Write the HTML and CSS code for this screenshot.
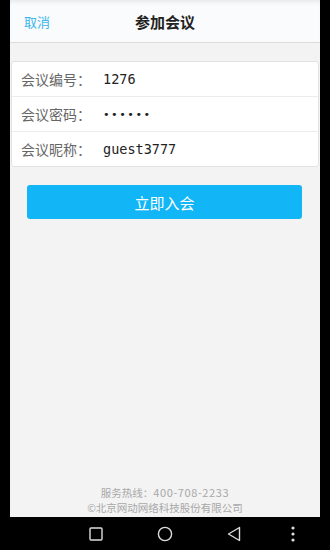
FILE: index.html
```html
<!DOCTYPE html>
<html>
<head>
<meta charset="utf-8">
<link rel="stylesheet" href="styles.css">
</head>
<body>
<div class="device">
  <div class="screen">
    <header class="header">
      <span class="cancel">取消</span>
      <span class="title">参加会议</span>
    </header>
    <div class="card">
      <div class="row"><span class="label">会议编号：</span><span class="value">1276</span></div>
      <div class="row"><span class="label">会议密码：</span><span class="value dots">••••••</span></div>
      <div class="row"><span class="label">会议昵称：</span><span class="value">guest3777</span></div>
    </div>
    <button class="join">立即入会</button>
    <div class="spacer"></div>
    <footer class="footer">
      <div>服务热线：<span class="phone">400-708-2233</span></div>
      <div>©北京网动网络科技股份有限公司</div>
    </footer>
  </div>
  <nav class="navbar">
    <svg class="nav-icon" width="14" height="14" viewBox="0 0 14 14"><rect x="1" y="1" width="12" height="12" rx="1" fill="none" stroke="#ddd" stroke-width="1.4"/></svg>
    <svg class="nav-icon" width="16" height="16" viewBox="0 0 16 16"><circle cx="8" cy="8" r="6.6" fill="none" stroke="#ddd" stroke-width="1.4"/></svg>
    <svg class="nav-icon" width="14" height="16" viewBox="0 0 14 16"><path d="M12.5 1.5 L1.5 8 L12.5 14.5 Z" fill="none" stroke="#ddd" stroke-width="1.4" stroke-linejoin="round"/></svg>
    <svg class="nav-icon" width="4" height="16" viewBox="0 0 4 16"><circle cx="2" cy="2" r="1.6" fill="#ddd"/><circle cx="2" cy="8" r="1.6" fill="#ddd"/><circle cx="2" cy="14" r="1.6" fill="#ddd"/></svg>
  </nav>
</div>
</body>
</html>
```
FILE: styles.css
```css
html, body {
  margin: 0;
  padding: 0;
  background: #000;
}
body {
  font-family: "Noto Sans CJK SC", "Noto Sans", sans-serif;
  width: 330px;
  height: 550px;
  overflow: hidden;
}
.device {
  width: 330px;
  height: 550px;
  display: flex;
  flex-direction: column;
}
.screen {
  margin: 0 10px;
  width: 310px;
  height: 517px;
  background: #f3f3f3;
  display: flex;
  flex-direction: column;
}
.header {
  height: 43px;
  background: #fafbfc;
  border-bottom: 1px solid #dcdcdc;
  box-shadow: inset 0 4px 4px -2px rgba(0,0,0,0.08);
  display: grid;
  grid-template-columns: 1fr auto 1fr;
  align-items: center;
  padding: 0 14px;
  box-sizing: border-box;
}
.cancel {
  color: #3ab6ea;
  font-size: 13px;
  justify-self: start;
}
.title {
  font-size: 15px;
  font-weight: bold;
  color: #222;
  grid-column: 2;
}
.card {
  margin: 18px 1px 0 1px;
  background: #fff;
  border: 1px solid #e2e2e2;
  border-radius: 3px;
}
.row {
  height: 34px;
  display: flex;
  align-items: center;
  padding-left: 9px;
  border-top: 1px solid #ececec;
}
.row:first-child {
  border-top: none;
}
.label {
  font-size: 14px;
  color: #666;
  width: 82px;
}
.value {
  font-family: "DejaVu Sans Mono", "Liberation Mono", monospace;
  font-size: 13.5px;
  color: #222;
}
.dots {
  letter-spacing: 1.5px;
  font-size: 11px;
}
.join {
  margin: 18px 18px 0 17px;
  height: 34px;
  border: none;
  border-radius: 3px;
  background: #12b6f6;
  color: #fff;
  font-family: "Noto Sans CJK SC", "Noto Sans", sans-serif;
  font-size: 15px;
  padding: 0;
}
.spacer {
  flex: 1;
}
.footer {
  text-align: center;
  font-size: 10.5px;
  line-height: 15px;
  color: #a8a8a8;
  padding-bottom: 2px;
}
.phone {
  font-size: 11px;
  letter-spacing: 0.6px;
}
.navbar {
  height: 33px;
  display: flex;
  align-items: center;
  position: relative;
}
.nav-icon {
  position: absolute;
  top: 50%;
  transform: translate(-50%, -50%);
}
.nav-icon:nth-child(1) { left: 96px; }
.nav-icon:nth-child(2) { left: 165px; }
.nav-icon:nth-child(3) { left: 234px; }
.nav-icon:nth-child(4) { left: 293px; }
```
